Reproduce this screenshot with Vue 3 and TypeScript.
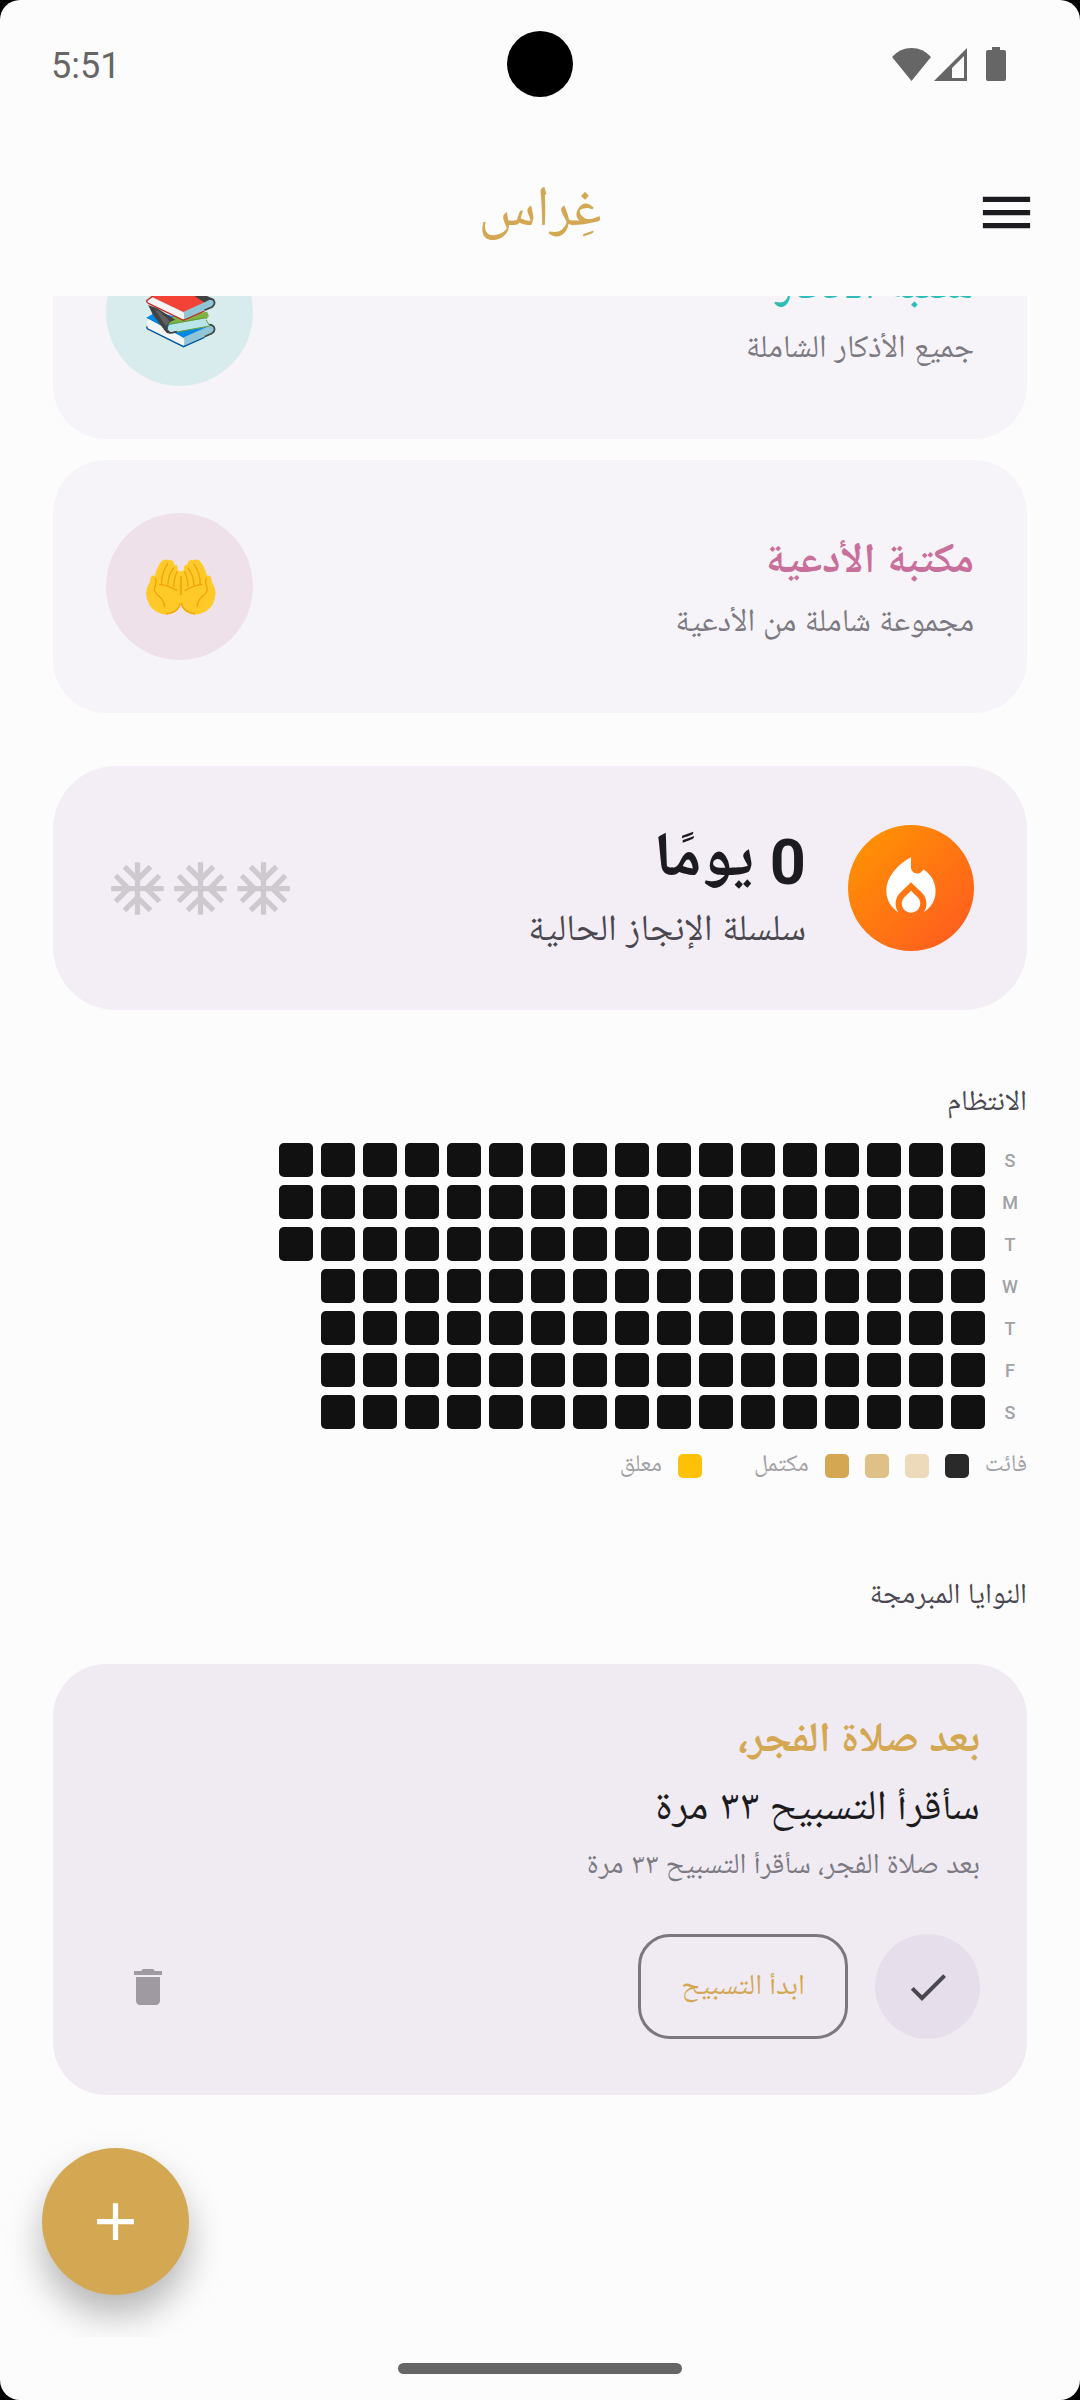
<script setup lang="ts">
interface Library {
  id: string
  title: string
  subtitle: string
  tone: 'teal' | 'rose'
}

interface WeekRow {
  day: string
  weeks: number
}

const libraries: Library[] = [
  { id: 'adhkar', title: 'مكتبة الأذكار', subtitle: 'جميع الأذكار الشاملة', tone: 'teal' },
  { id: 'duas', title: 'مكتبة الأدعية', subtitle: 'مجموعة شاملة من الأدعية', tone: 'rose' },
]

const rows: WeekRow[] = [
  { day: 'S', weeks: 17 },
  { day: 'M', weeks: 17 },
  { day: 'T', weeks: 17 },
  { day: 'W', weeks: 16 },
  { day: 'T', weeks: 16 },
  { day: 'F', weeks: 16 },
  { day: 'S', weeks: 16 },
]

const freezes = 3
</script>

<template>
  <div class="device">
    <div class="screen" dir="rtl" lang="ar">
      <div class="status" dir="ltr">
        <span class="clock">5:51</span>
        <span class="camera"></span>
        <span class="signals">
          <svg class="wifi" viewBox="0 0 39 33" aria-hidden="true"><path d="M0 9Q8 0 19.500 0T39 9L19.500 33Z" /></svg>
          <svg class="cell" viewBox="0 0 33 33" aria-hidden="true"><path fill-rule="evenodd" d="M33 0V33H0ZM30 8L18 20V30H30Z" /></svg>
          <svg class="battery" viewBox="0 0 20 34" aria-hidden="true"><path d="M6 0H14V3H18Q20 3 20 5V32Q20 34 18 34H2Q0 34 0 32V5Q0 3 2 3H6Z" /></svg>
        </span>
      </div>

      <header class="bar">
        <button class="menu" type="button" aria-label="القائمة">
          <svg viewBox="0 0 24 24" aria-hidden="true"><path d="M3 18h18v-2H3v2zm0-5h18v-2H3v2zm0-7v2h18V6H3z" /></svg>
        </button>
        <h1>غِراس</h1>
      </header>

      <main class="viewport">
        <div class="scroll">
          <nav class="libraries">
            <a v-for="lib in libraries" :key="lib.id" class="library" :class="lib.tone" :href="'#' + lib.id">
              <span class="library-text">
                <span class="library-title">{{ lib.title }}</span>
                <span class="library-sub">{{ lib.subtitle }}</span>
              </span>
              <span class="disc">
                <svg v-if="lib.tone === 'teal'" viewBox="307.500 -13 222 222" aria-hidden="true">
                  <path fill="#0288e5" d="M317 112L346 96L520 134L430 173Z" />
                  <path fill="#f5f5f5" d="M324 117L424 170Q438 182 428 195L321 146Q317 130 324 117Z" />
                  <path fill="#90c4d6" d="M430 171L514 133Q528 144 516 158L430 196Q434 184 430 171Z" />
                  <path fill="none" stroke="#01579b" stroke-width="4" d="M319 138Q318 146 326 148L429 199L492 171" />
                  <path fill="none" stroke="#424242" stroke-width="5" d="M492 169L515 159Q527 150 519 138L508 132" />
                  <path fill="#7cb342" d="M398 108L500 94L505 107L496 120L384 132Z" />
                  <path fill="#b9e4ea" d="M386 133L496 114Q499 127 508 138L388 158Q378 146 386 133Z" />
                  <path fill="none" stroke="#689f38" stroke-width="3" d="M384 132L496 112M408 155L508 137L497 119" />
                  <path fill="#424242" d="M323 74L350 84L404 118Q382 124 381 140Q380 152 390 159Q380 162 373 151L336 101Z" />
                  <path fill="#616161" d="M343 88L356 92L388 123L376 137Z" />
                  <path fill="none" stroke="#424242" stroke-width="5" d="M381 150Q385 159 396 157L409 154" />
                  <path fill="#424242" d="M405 15L470 34L522 57L430 94Z" />
                  <path fill="#f44336" d="M330 48L375 14L440 32L492 67L430 96Z" />
                  <path fill="#f5f5f5" d="M332 52L424 94Q438 105 428 118L319 68Z" />
                  <path fill="#90c4d6" d="M430 94L513 56Q528 67 516 80L430 119Q434 106 430 94Z" />
                  <path fill="none" stroke="#c62828" stroke-width="4" d="M338 47L319 60Q317 67 324 69L429 120L492 92" />
                  <path fill="none" stroke="#424242" stroke-width="5" d="M492 90L515 80Q527 70 519 59L470 42" />
                </svg>
                <svg v-else viewBox="307.500 808 222 222" aria-hidden="true">
                  <g v-for="side in 2" :key="side" :transform="side === 2 ? 'translate(842 0) scale(-1 1)' : undefined">
                    <path fill="#ffca28" d="M422 965V878Q420 867 412 870Q413 850 401 852Q399 835 385 839Q376 834 366 839Q349 858 343 885Q333 883 330 891L327 906Q316 924 317 940Q319 974 345 992Q376 1010 405 994Q422 980 422 965Z" />
                    <path fill="none" stroke="#f0a30a" stroke-width="4" d="M382 849Q362 878 363 911M400 860Q382 885 382 914M410 872Q399 896 400 919M356 911Q384 914 410 930M344 891Q350 905 342 922Q339 934 355 946Q372 960 372 980M420 886V944M420 968Q412 996 378 1000" />
                  </g>
                </svg>
              </span>
            </a>
          </nav>

          <section class="streak">
            <span class="flame">
              <svg viewBox="0 0 24 24" aria-hidden="true">
                <path d="M12 12.900l-2.130 2.090C9.310 15.550 9 16.280 9 17.060 9 18.680 10.350 20 12 20s3-1.320 3-2.940c0-.78-.31-1.520-.87-2.070L12 12.900z" />
                <path d="M16 6l-.44.55C14.380 8.020 12 7.190 12 5.300V2S4 6 4 13c0 2.920 1.560 5.470 3.890 6.860-.56-.79-.89-1.760-.89-2.800 0-1.320.52-2.560 1.470-3.500L12 10.100l3.530 3.470c.95.93 1.470 2.170 1.470 3.500 0 1.020-.31 1.960-.85 2.750 1.890-1.150 3.290-3.060 3.710-5.300.66-3.550-1.070-6.900-3.860-8.520z" />
              </svg>
            </span>
            <div class="streak-text">
              <p class="streak-count"><span class="num">0</span><span>يومًا</span></p>
              <p class="streak-label">سلسلة الإنجاز الحالية</p>
            </div>
            <div class="freezes">
              <svg v-for="n in freezes" :key="n" viewBox="0 0 24 24" aria-hidden="true">
                <path d="M22 11h-4.170l3.240-3.240-1.410-1.420L15 11h-2V9l4.660-4.660-1.420-1.410L13 6.170V2h-2v4.170L7.760 2.930 6.340 4.340 11 9v2H9L4.340 6.340 2.930 7.760 6.170 11H2v2h4.170l-3.240 3.240 1.410 1.420L9 13h2v2l-4.660 4.660 1.420 1.410L11 17.830V22h2v-4.170l3.240 3.240 1.420-1.410L13 15v-2h2l4.660 4.660 1.410-1.420L17.830 13H22z" />
              </svg>
            </div>
          </section>

          <section class="consistency">
            <h2>الانتظام</h2>
            <div class="heatmap">
              <div v-for="(row, i) in rows" :key="i" class="week-row">
                <span class="day">{{ row.day }}</span>
                <i v-for="n in row.weeks" :key="n" class="cell-box"></i>
              </div>
            </div>
            <div class="legend">
              <span>فائت</span>
              <i class="swatch missed"></i>
              <i class="swatch low"></i>
              <i class="swatch mid"></i>
              <i class="swatch full"></i>
              <span>مكتمل</span>
              <i class="swatch paused"></i>
              <span>معلق</span>
            </div>
          </section>

          <section class="intentions">
            <h2>النوايا المبرمجة</h2>
            <article class="intention">
              <h3>بعد صلاة الفجر،</h3>
              <p class="action">سأقرأ التسبيح ٣٣ مرة</p>
              <p class="summary">بعد صلاة الفجر، سأقرأ التسبيح ٣٣ مرة</p>
              <div class="controls">
                <button class="done" type="button" aria-label="تم">
                  <svg viewBox="0 0 24 24" aria-hidden="true"><path d="M9 16.170L4.830 12l-1.420 1.410L9 19 21 7l-1.410-1.410z" /></svg>
                </button>
                <button class="start" type="button">ابدأ التسبيح</button>
                <button class="remove" type="button" aria-label="حذف">
                  <svg viewBox="0 0 24 24" aria-hidden="true"><path d="M6 19c0 1.100.9 2 2 2h8c1.100 0 2-.9 2-2V7H6v12zM19 4h-3.500l-1-1h-5l-1 1H5v2h14V4z" /></svg>
                </button>
              </div>
            </article>
          </section>
        </div>
        <button class="fab" type="button" aria-label="إضافة">
          <svg viewBox="0 0 24 24" aria-hidden="true"><path d="M19 13h-6v6h-2v-6H5v-2h6V5h2v6h6v2z" /></svg>
        </button>
      </main>

      <footer class="gesture"><span class="handle"></span></footer>
    </div>
  </div>
</template>

<style>
html,
body {
  margin: 0;
  background: #000;
}
</style>

<style scoped>
.device {
  background: #000;
}
.screen {
  display: flex;
  flex-direction: column;
  min-height: 100vh;
  overflow: hidden;
  border-radius: 20px;
  background: #fcfcfc;
  color: #1c1b20;
  font-family: Roboto, "Noto Naskh Arabic UI", "Noto Naskh Arabic", "Noto Sans Arabic", "DejaVu Sans", sans-serif;
}
h1,
h2,
h3,
p {
  margin: 0;
  font-weight: 400;
}
svg {
  display: block;
  fill: currentColor;
}
button {
  display: flex;
  align-items: center;
  justify-content: center;
  padding: 0;
  border: 0;
  background: none;
  color: inherit;
  font: inherit;
}

.status {
  display: grid;
  grid-template-columns: 1fr auto 1fr;
  align-items: center;
  height: 128px;
  padding: 0 74px 0 51px;
  color: #666;
}
.clock {
  padding-top: 4px;
  font-size: 36px;
  line-height: 44px;
}
.camera {
  width: 66px;
  height: 66px;
  margin-left: 23px;
  border-radius: 50%;
  background: #000;
}
.signals {
  display: flex;
  align-items: center;
  justify-content: flex-end;
}
.wifi {
  width: 39px;
  height: 33px;
}
.cell {
  width: 33px;
  height: 33px;
  margin: 0 19px 0 3px;
}
.battery {
  width: 20px;
  height: 34px;
}

.bar {
  display: grid;
  grid-template-columns: 1fr auto 1fr;
  align-items: center;
  height: 168px;
  padding: 0 42px;
}
.menu {
  width: 63px;
  height: 63px;
}
.menu svg {
  width: 63px;
  height: 63px;
}
.bar h1 {
  padding-top: 4px;
  color: #d4a853;
  font-size: 57px;
  line-height: 80px;
}

.viewport {
  position: relative;
  flex: 1;
  overflow: hidden;
}
.scroll {
  margin-top: -110px;
  padding: 0 53px;
}
.libraries {
  display: flex;
  flex-direction: column;
  gap: 21px;
}
.library {
  display: flex;
  align-items: center;
  justify-content: space-between;
  padding: 53px;
  border-radius: 53px;
  background: #f6f4f8;
  text-decoration: none;
}
.library-text {
  display: flex;
  flex-direction: column;
  gap: 8px;
  padding-top: 10px;
}
.library-title {
  font-size: 42px;
  line-height: 56px;
  font-weight: 700;
}
.library-sub {
  color: #7c7982;
  font-size: 32px;
  line-height: 48px;
}
.disc {
  display: flex;
  align-items: center;
  justify-content: center;
  width: 147px;
  height: 147px;
  border-radius: 50%;
}
.disc svg {
  width: 74px;
  height: 74px;
}
.teal .library-title {
  color: #2cbdb5;
}
.teal .disc {
  background: #d8ecee;
}
.rose .library-title {
  color: #c96f9b;
}
.rose .disc {
  background: #eee1ea;
}

.streak {
  display: flex;
  align-items: center;
  margin-top: 53px;
  padding: 59px 53px;
  border-radius: 63px;
  background: #f3eef5;
}
.flame {
  display: flex;
  align-items: center;
  justify-content: center;
  width: 126px;
  height: 126px;
  border-radius: 50%;
  background: linear-gradient(135deg, #ff9800, #ff5722);
  color: #fff;
}
.flame svg {
  width: 74px;
  height: 74px;
}
.streak-text {
  display: flex;
  flex: 1;
  flex-direction: column;
  gap: 8px;
  height: 126px;
  margin-right: 42px;
}
.streak-count {
  display: flex;
  align-items: center;
  gap: 16px;
  font-size: 63px;
  line-height: 76px;
  font-weight: 700;
}
.streak-label {
  color: #4a4751;
  font-size: 37px;
  line-height: 48px;
}
.freezes {
  display: flex;
  color: #cec9cf;
}
.freezes svg {
  width: 63px;
  height: 63px;
}

h2 {
  color: #4a4751;
  font-size: 29px;
  line-height: 40px;
}
.consistency {
  margin-top: 74px;
}
.heatmap {
  display: flex;
  flex-direction: column;
  gap: 8px;
  margin-top: 19px;
}
.week-row {
  display: flex;
  gap: 8px;
}
.day {
  width: 34px;
  height: 34px;
  color: #a2a1a5;
  font-size: 18px;
  line-height: 36px;
  font-weight: 500;
  text-align: center;
}
.cell-box {
  width: 34px;
  height: 34px;
  border-radius: 5px;
  background: #111;
}
.legend {
  display: flex;
  align-items: center;
  gap: 16px;
  margin-top: 21px;
  color: #a2a1a5;
  font-size: 24px;
  line-height: 32px;
}
.swatch {
  width: 24px;
  height: 24px;
  border-radius: 5px;
}
.missed {
  background: #2a2a2a;
}
.low {
  background: #ecdabb;
}
.mid {
  background: #dfc187;
}
.full {
  background: #d4a853;
}
.paused {
  margin-right: 36px;
  background: #ffc107;
}

.intentions {
  margin-top: 95px;
}
.intention {
  margin-top: 47px;
  padding: 51px 47px 56px;
  border-radius: 53px;
  background: #f0ebf2;
}
.intention h3 {
  margin-bottom: 8px;
  color: #d4a853;
  font-size: 42px;
  line-height: 56px;
  font-weight: 700;
}
.action {
  font-size: 42px;
  line-height: 64px;
}
.summary {
  color: #7c7982;
  font-size: 29px;
  line-height: 48px;
}
.controls {
  display: flex;
  align-items: center;
  gap: 27px;
  margin-top: 43px;
}
.done {
  width: 105px;
  height: 105px;
  border-radius: 50%;
  background: #e6dfeb;
  color: #4a4751;
}
.done svg,
.remove svg {
  width: 48px;
  height: 48px;
}
.start {
  min-width: 210px;
  height: 105px;
  padding: 0 40px;
  border: 3px solid #7c767e;
  border-radius: 32px;
  color: #d4a853;
  font-size: 29px;
}
.remove {
  width: 96px;
  height: 96px;
  margin-right: auto;
  color: #9f99a2;
}

.fab {
  position: absolute;
  bottom: 42px;
  left: 42px;
  width: 147px;
  height: 147px;
  border-radius: 50%;
  background: #d4a853;
  box-shadow: 0 20px 36px rgba(0, 0, 0, 0.28);
  color: #fff;
}
.fab svg {
  width: 63px;
  height: 63px;
}

.gesture {
  display: flex;
  justify-content: center;
  padding: 26px 0;
}
.handle {
  width: 284px;
  height: 11px;
  border-radius: 6px;
  background: #666;
}
</style>
